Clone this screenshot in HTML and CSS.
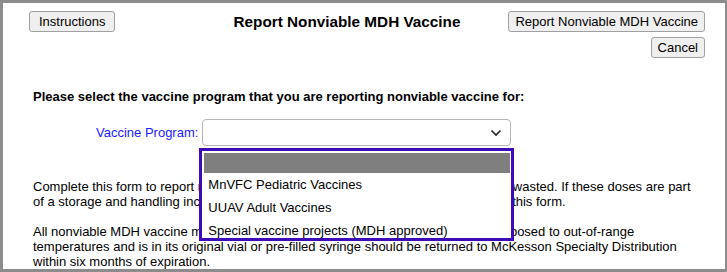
FILE: index.html
```html
<!DOCTYPE html>
<html>
<head>
<meta charset="utf-8">
<link rel="stylesheet" href="styles.css">
</head>
<body>
<div class="page">
  <div class="header">
    <button class="btn btn-wide">Instructions</button>
    <h1 class="title">Report Nonviable MDH Vaccine</h1>
    <div class="actions">
      <button class="btn">Report Nonviable MDH Vaccine</button>
      <button class="btn">Cancel</button>
    </div>
  </div>
  <div class="content">
    <p class="prompt">Please select the vaccine program that you are reporting nonviable vaccine for:</p>
    <div class="field">
      <label class="label">Vaccine Program:</label>
      <div class="select-wrap">
        <div class="select">
          <svg class="chev" width="12" height="8" viewBox="0 0 12 8"><path d="M1.5 1.5 L6 6 L10.5 1.5" fill="none" stroke="#222" stroke-width="1.6"/></svg>
        </div>
        <div class="dropdown">
          <div class="opt blank"></div>
          <div class="opt">MnVFC Pediatric Vaccines</div>
          <div class="opt">UUAV Adult Vaccines</div>
          <div class="opt">Special vaccine projects (MDH approved)</div>
        </div>
      </div>
    </div>
    <p class="text">Complete this form to report nonviable MDH vaccine that is expired, spoiled or was wasted. If these doses are part of a storage and handling incident, please also contact the MDH before completing this form.</p>
    <p class="text">All nonviable MDH vaccine material that has expired, spoiled, or otherwise been exposed to out-of-range temperatures and is in its original vial or pre-filled syringe should be returned to McKesson Specialty Distribution within six months of expiration.</p>
  </div>
</div>
</body>
</html>
```
FILE: styles.css
```css
html, body { margin: 0; padding: 0; }
body {
  width: 727px;
  height: 272px;
  box-sizing: border-box;
  border: 3px solid #8c8c8c;
  border-right-width: 2px;
  background: #fff;
  overflow: hidden;
  font-family: "Liberation Sans", Arial, sans-serif;
  font-size: 13px;
  color: #000;
}
.page {
  padding: 8px 20px 0 26px;
}
.header {
  display: flex;
  align-items: flex-start;
}
.btn {
  font-family: "Liberation Sans", Arial, sans-serif;
  font-size: 13px;
  color: #000;
  background: #efefef;
  border: 1px solid #a0a0a0;
  border-radius: 3px;
  height: 21px;
  padding: 0 6px;
  margin: 0;
  line-height: 19px;
}
.btn-wide {
  padding: 0 9px;
}
.title {
  margin: 0 0 0 118px;
  font-size: 15.3px;
  font-weight: bold;
  line-height: 21px;
}
.actions {
  margin-left: auto;
  display: flex;
  flex-direction: column;
  align-items: flex-end;
  gap: 5px;
}
.content {
  padding-left: 4px;
}
.prompt {
  margin: 31px 0 0 0;
  font-weight: bold;
  line-height: 15px;
}
.field {
  display: flex;
  align-items: center;
  margin-top: 15px;
  margin-left: 63px;
}
.label {
  color: #1a1aff;
  margin-right: 4px;
}
.select-wrap {
  position: relative;
}
.select {
  width: 309px;
  height: 27px;
  box-sizing: border-box;
  border: 1px solid #b5b5b5;
  border-radius: 4px;
  display: flex;
  align-items: center;
  justify-content: flex-end;
  padding-right: 8px;
}
.dropdown {
  position: absolute;
  left: -3px;
  top: 29px;
  width: 315px;
  height: 93px;
  box-sizing: border-box;
  border: 3px solid #3d0cb8;
  background: #fff;
  padding: 1px;
  overflow: hidden;
}
.opt {
  height: 23px;
  line-height: 24px;
  padding-left: 5px;
  white-space: nowrap;
}
.opt.blank {
  height: 20px;
  background: #7f7f7f;
  margin: 1px 0 0 1px;
}
.text {
  margin: 33px 0 0 0;
  width: 662px;
  line-height: 15px;
}
.text + .text {
  margin-top: 15px;
}
```
